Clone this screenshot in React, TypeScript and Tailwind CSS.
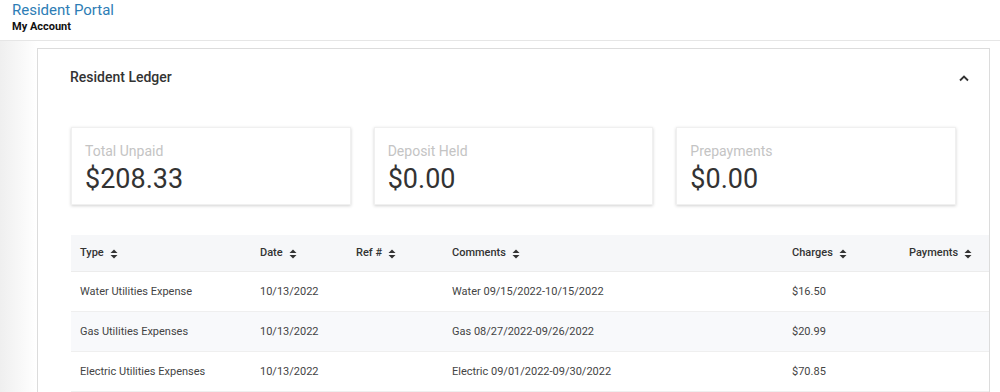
const summary = [
  { label: 'Total Unpaid', value: '$208.33' },
  { label: 'Deposit Held', value: '$0.00' },
  { label: 'Prepayments', value: '$0.00' },
];

const columns = [
  { name: 'Type', w: 'w-[180px]' },
  { name: 'Date', w: 'w-[96px]' },
  { name: 'Ref #', w: 'w-[96px]' },
  { name: 'Comments', w: 'w-[340px]' },
  { name: 'Charges', w: 'w-[117px]' },
  { name: 'Payments', w: 'w-[117px]' },
];

const rows = [
  ['Water Utilities Expense', '10/13/2022', '', 'Water 09/15/2022-10/15/2022', '$16.50', ''],
  ['Gas Utilities Expenses', '10/13/2022', '', 'Gas 08/27/2022-09/26/2022', '$20.99', ''],
  ['Electric Utilities Expenses', '10/13/2022', '', 'Electric 09/01/2022-09/30/2022', '$70.85', ''],
];

function SortIcon() {
  return (
    <svg width="8" height="10" viewBox="0 0 8 10" className="ml-[6px] shrink-0">
      <path d="M4 0.5 L7.5 4 H0.5 Z" fill="#333" />
      <path d="M4 9.5 L7.5 6 H0.5 Z" fill="#333" />
    </svg>
  );
}

export default function App() {
  return (
    <div className="w-[1000px] h-[392px] overflow-hidden bg-white font-['Roboto',sans-serif]">
      <header className="h-[41px] border-b border-[#e6e6e6] pl-3 pt-[1px]">
        <div className="text-[15px] leading-[19px] text-[#2d7db5]">Resident Portal</div>
        <div className="text-[11px] leading-[14px] font-bold text-[#111]">My Account</div>
      </header>

      <div className="flex">
        <div className="w-[37px] shrink-0 h-[360px] bg-gradient-to-r from-[#efefef] to-white" />
        <section className="mt-[7px] mr-[10px] flex-1 min-w-0 border border-[#dcdcdc] overflow-hidden">
          <div className="h-[55px] pt-[2px] flex items-center justify-between pl-[32px] pr-[19px]">
            <h2 className="text-[14px] font-medium text-[#333]">Resident Ledger</h2>
            <svg width="12" height="8" viewBox="0 0 12 8">
              <path d="M2 6.5 L6 2.5 L10 6.5" fill="none" stroke="#333" strokeWidth="1.8" />
            </svg>
          </div>

          <div className="mt-[23px] pl-[33px] pr-[33px] flex gap-[23px]">
            {summary.map((s) => (
              <div
                key={s.label}
                className="flex-1 h-[78px] bg-white border border-[#f0f0f0] shadow-[0_1px_3px_rgba(0,0,0,0.18)] pl-[13px] pt-[15px]"
              >
                <div className="text-[14px] leading-[17px] text-[#c4c4c4]">{s.label}</div>
                <div className="mt-[2px] text-[27px] leading-[34px] text-[#333]">{s.value}</div>
              </div>
            ))}
          </div>

          <div className="mt-[30px] pl-[33px] overflow-hidden">
            <div className="w-[1000px]">
              <div className="flex h-[37px] pt-[1px] items-center bg-[#f6f7f9] border-b border-[#ececec]">
                {columns.map((c) => (
                  <div key={c.name} className={`${c.w} shrink-0 pl-[9px] flex items-center text-[11px] font-medium text-[#333]`}>
                    {c.name}
                    <SortIcon />
                  </div>
                ))}
              </div>
              {rows.map((r, i) => (
                <div
                  key={i}
                  className={`flex h-[40px] pt-[2px] items-center border-b border-[#efefef] ${i % 2 === 1 ? 'bg-[#f8f9fb]' : 'bg-white'}`}
                >
                  {r.map((cell, j) => (
                    <div key={j} className={`${columns[j].w} shrink-0 pl-[9px] text-[11px] text-[#444]`}>
                      {cell}
                    </div>
                  ))}
                </div>
              ))}
            </div>
          </div>
        </section>
      </div>
    </div>
  );
}
